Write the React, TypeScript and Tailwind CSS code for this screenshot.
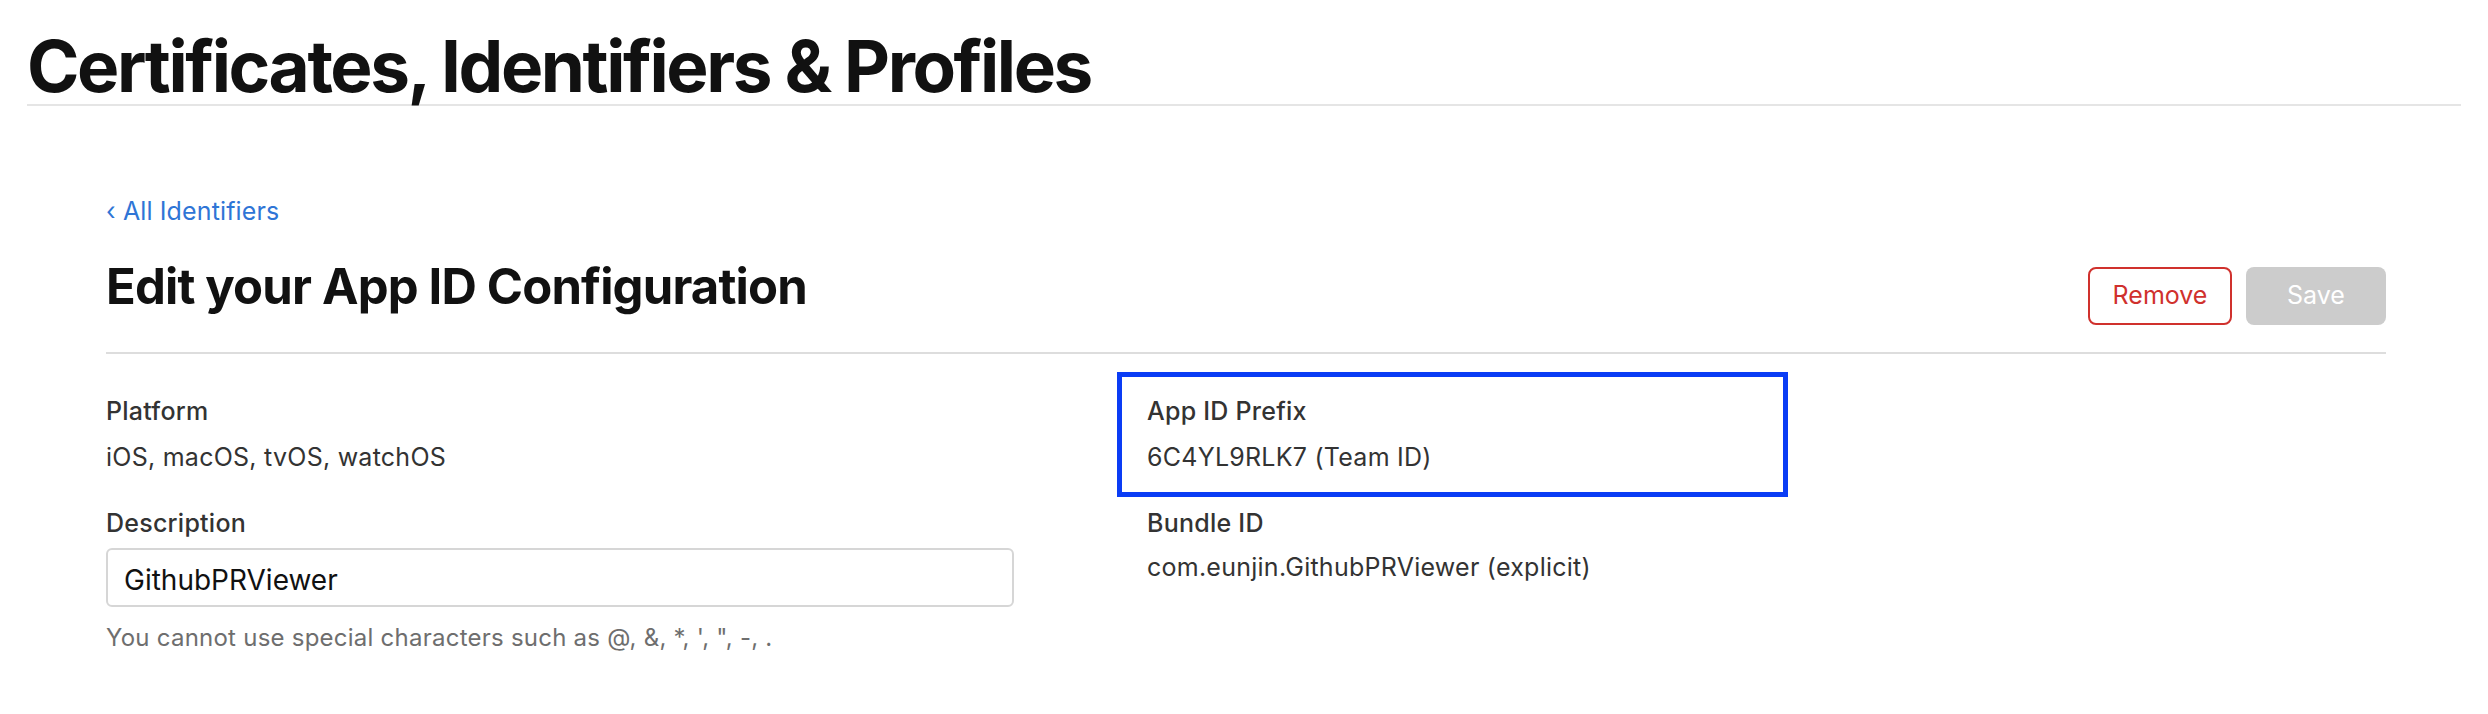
import { useState } from 'react'

const font = "font-['Inter','Liberation_Sans',sans-serif]"

export default function App() {
  const [description, setDescription] = useState('GithubPRViewer')

  return (
    <div className={`min-h-screen bg-white text-[#333] ${font}`}>
      {/* page header */}
      <header className="px-[27px] pt-[30px]">
        <h1 className="text-[71px] font-bold leading-[72px] tracking-[-0.034em] text-[#111]">
          Certificates, Identifiers &amp; Profiles
        </h1>
        <div className="mt-[2px] h-[2px] bg-[#e5e5e5]" />
      </header>

      <main className="pl-[106px] pr-[102px]">
        <a href="#" className="mt-[90px] block text-[25px] leading-[30px] tracking-[0.005em] text-[#2f75d6]">
          ‹ All Identifiers
        </a>

        {/* title row */}
        <div className="mt-[32px] flex items-start justify-between">
          <h2 className="text-[49px] font-bold leading-[58px] tracking-[-0.017em] text-[#111]">
            Edit your App ID Configuration
          </h2>
          <div className="mt-[9px] flex gap-[14px]">
            <button className="h-[58px] w-[144px] rounded-[8px] border-2 border-[#d0312d] text-[25px] text-[#d0312d]">
              Remove
            </button>
            <button disabled className="h-[58px] w-[140px] rounded-[8px] bg-[#cccccc] text-[25px] text-white">
              Save
            </button>
          </div>
        </div>
        <div className="mt-[27px] h-[2px] bg-[#dddddd]" />

        {/* fields */}
        <div className="mt-[42px] flex text-[25px] leading-[30px] tracking-[0.01em]">
          <div className="w-[1041px]">
            <p className="font-medium">Platform</p>
            <p className="mt-[16px]">iOS, macOS, tvOS, watchOS</p>

            <p className="mt-[36px] font-medium">Description</p>
            <input
              type="text"
              value={description}
              onChange={(e) => setDescription(e.target.value)}
              className="mt-[10px] block h-[59px] w-[908px] rounded-[6px] border-2 border-[#d6d6d6] px-[16px] pt-[4px] text-[28px] tracking-normal text-[#111] outline-none"
            />
            <p className="mt-[16px] text-[24px] tracking-[0.01em] text-[#6e6e6e]">
              You cannot use special characters such as @, &amp;, *, ', ", -, .
            </p>
          </div>

          <div className="flex-1">
            <div className="relative">
              {/* highlight box */}
              <div className="pointer-events-none absolute left-[-30px] top-[-24px] h-[125px] w-[671px] border-[5px] border-[#0a3cf5]" />
              <p className="font-medium">App ID Prefix</p>
              <p className="mt-[16px]">6C4YL9RLK7 (Team ID)</p>
            </div>

            <p className="mt-[36px] font-medium">Bundle ID</p>
            <p className="mt-[14px]">com.eunjin.GithubPRViewer (explicit)</p>
          </div>
        </div>
      </main>
    </div>
  )
}
